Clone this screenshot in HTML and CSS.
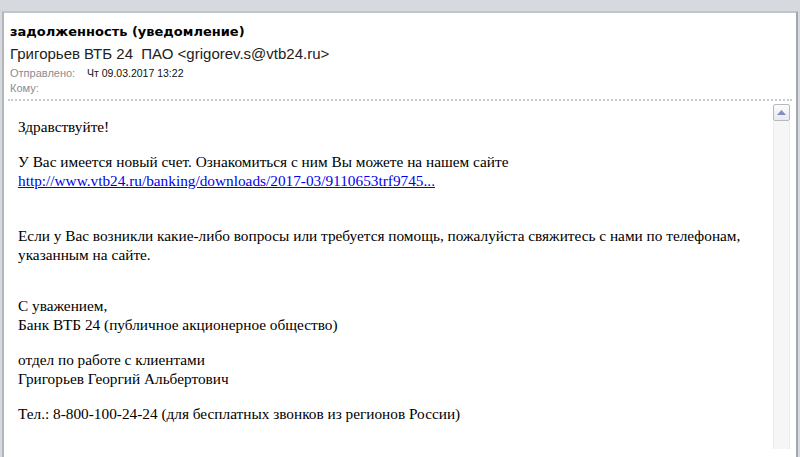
FILE: index.html
```html
<!DOCTYPE html>
<html lang="ru">
<head>
    <meta charset="UTF-8">
    <title>задолженность (уведомление)</title>
    <link rel="stylesheet" href="styles.css">
</head>
<body>
    <div class="topband"></div>
    <div class="window">
        <div class="header">
            <div class="subject">задолженность (уведомление)</div>
            <div class="sender">Григорьев ВТБ 24&nbsp; ПАО &lt;grigorev.s@vtb24.ru&gt;</div>
            <div class="meta first"><span class="label">Отправлено:</span><span class="value">Чт 09.03.2017 13:22</span></div>
            <div class="meta"><span class="label">Кому:</span></div>
        </div>
        <div class="body-wrap">
            <div class="message">
                <p>Здравствуйте!</p>
                <p>У Вас имеется новый счет. Ознакомиться с ним Вы можете на нашем сайте<br>
                <a href="#">http://www.vtb24.ru/banking/downloads/2017-03/9110653trf9745...</a></p>
                <p class="gap">Если у Вас возникли какие-либо вопросы или требуется помощь, пожалуйста свяжитесь с нами по телефонам, указанным на сайте.</p>
                <p class="gap-sm">С уважением,<br>Банк ВТБ 24 (публичное акционерное общество)</p>
                <p>отдел по работе с клиентами<br>Григорьев Георгий Альбертович</p>
                <p>Тел.: 8-800-100-24-24 (для бесплатных звонков из регионов России)</p>
            </div>
            <div class="scrollbar">
                <div class="arrow-up">
                    <svg width="9" height="5" viewBox="0 0 9 5"><polygon points="4.5,0 9,5 0,5" fill="#7f8fc0"/></svg>
                </div>
                <div class="track"></div>
            </div>
        </div>
    </div>
</body>
</html>
```

FILE: styles.css
```css
html, body {
    margin: 0;
    padding: 0;
    height: 100%;
    overflow: hidden;
}
body {
    background: #d6d9dd;
    font-family: 'Liberation Sans', Arial, sans-serif;
}
.topband {
    height: 11px;
    background: #d6d9dd;
}
.window {
    margin-left: 2px;
    margin-right: 2px;
    height: 446px;
    background: #fff;
    border-top: 2px solid #c2c6cb;
    border-left: 2px solid #b3b7bc;
    border-right: 2px solid #a4a8ad;
    box-sizing: border-box;
}
.header {
    padding: 8px 6px 0 4px;
}
.subject {
    font-family: 'DejaVu Sans', 'Liberation Sans', sans-serif;
    font-weight: bold;
    font-size: 13px;
    color: #000;
    height: 22px;
    line-height: 22px;
    padding-left: 2px;
}
.sender {
    font-size: 15px;
    color: #222;
    height: 22px;
    line-height: 22px;
    padding-left: 2px;
}
.meta {
    font-size: 10.5px;
    height: 15px;
    line-height: 15px;
    display: flex;
    padding-left: 2px;
}
.meta.first {
    margin-top: 1px;
}
.label {
    color: #8a8d92;
    font-size: 11px;
    width: 77px;
}
.value {
    color: #111;
}
.body-wrap {
    margin-top: 3px;
    border-top: 2px dotted #c9cbce;
    margin-left: 4px;
    margin-right: 4px;
    display: flex;
    height: 348px;
}
.message {
    flex: 1;
    padding: 16px 0 0 10px;
    font-family: 'Liberation Serif', 'Times New Roman', serif;
    font-size: 15.3px;
    line-height: 19px;
    color: #000;
}
.message p {
    margin: 0 0 16px 0;
}
.message p.gap {
    margin-top: 36px;
}
.message p.gap-sm {
    margin-top: 32px;
}
.message a {
    color: #0000ee;
}
.scrollbar {
    width: 17px;
    margin-top: 3px;
    margin-right: 2px;
    display: flex;
    flex-direction: column;
}
.arrow-up {
    height: 15px;
    border: 1px solid #b6babf;
    border-radius: 2px;
    background: linear-gradient(#fbfbfc, #e8eaed);
    display: flex;
    align-items: center;
    justify-content: center;
}
.track {
    flex: 1;
    background: #f6f6f7;
    border-left: 1px solid #ececee;
    border-right: 1px solid #ececee;
}
```
